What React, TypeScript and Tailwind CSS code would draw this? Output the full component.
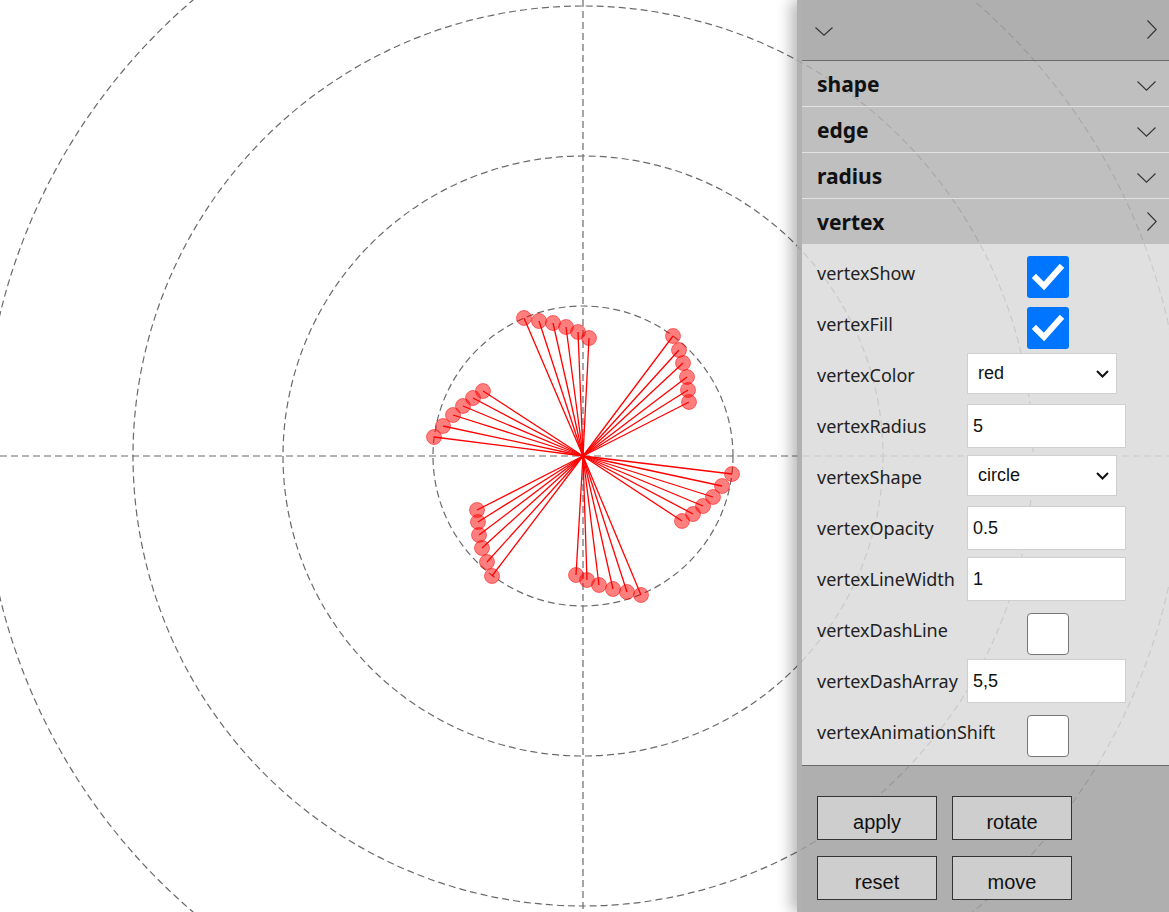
import React from "react";

const CX = 583;
const CY = 456;

// vertex positions read off the plot, grouped by arm
const vertices: [number, number][] = [
  [524, 318], [539, 321], [553, 323], [566, 327], [578, 332], [589, 338],
  [673, 336], [679, 350], [683, 363], [687, 377], [688, 390], [689, 402],
  [483, 391], [473, 398], [463, 406], [453, 415], [443, 426], [434, 437],
  [732, 474], [722, 486], [713, 497], [703, 506], [693, 514], [682, 521],
  [477, 510], [478, 522], [479, 535], [482, 548], [487, 562], [492, 576],
  [576, 575], [587, 580], [599, 585], [613, 589], [627, 592], [641, 595],
];

const Chart = () => (
  <svg width={1169} height={912} className="block">
    {[150, 300, 450, 600].map((r) => (
      <circle key={r} cx={CX} cy={CY} r={r} fill="none" stroke="#6a6a6a" strokeWidth={1.2} strokeDasharray="7 4" />
    ))}
    <line x1={0} y1={CY} x2={1169} y2={CY} stroke="#6a6a6a" strokeWidth={1.2} strokeDasharray="7 4" />
    <line x1={CX} y1={0} x2={CX} y2={912} stroke="#6a6a6a" strokeWidth={1.2} strokeDasharray="7 4" />
    {vertices.map(([x, y], i) => (
      <g key={i}>
        <line x1={CX} y1={CY} x2={x} y2={y} stroke="#ff0000" strokeWidth={1.3} />
        <circle cx={x} cy={y} r={7.5} fill="#ff0000" fillOpacity={0.5} stroke="#ff0000" strokeOpacity={0.5} />
      </g>
    ))}
  </svg>
);

const ChevronDown = ({ w = 19, h = 10 }: { w?: number; h?: number }) => (
  <svg width={w} height={h} viewBox={`0 0 ${w} ${h}`} fill="none">
    <path d={`M0.5 0.5 L${w / 2} ${h - 0.8} L${w - 0.5} 0.5`} stroke="#333" strokeWidth={1.1} />
  </svg>
);

const ChevronRight = ({ w = 10, h = 19 }: { w?: number; h?: number }) => (
  <svg width={w} height={h} viewBox={`0 0 ${w} ${h}`} fill="none">
    <path d={`M0.5 0.5 L${w - 0.8} ${h / 2} L0.5 ${h - 0.5}`} stroke="#333" strokeWidth={1.1} />
  </svg>
);

const Checkbox = ({ checked }: { checked: boolean }) =>
  checked ? (
    <div className="ml-[60px] mt-[5px] w-[42px] h-[42px] rounded-[3px] bg-[#0075ff] flex items-center justify-center">
      <svg width={42} height={42} viewBox="0 0 42 42" fill="none">
        <path d="M9 22 L17 30 L33 12" stroke="#fff" strokeWidth={6} strokeLinecap="square" strokeLinejoin="miter" />
      </svg>
    </div>
  ) : (
    <div className="ml-[60px] mt-[5px] w-[42px] h-[42px] rounded-[4px] bg-white border border-[#767676]" />
  );

const TextInput = ({ value }: { value: string }) => (
  <div className="-mt-[3px] w-[159px] h-[44px] bg-white border border-[#cfcfcf] px-[5px] flex items-center text-[18px] text-[#111] font-['Liberation_Sans',Arial,sans-serif]">
    {value}
  </div>
);

const Select = ({ value }: { value: string }) => (
  <div className="-mt-[6px] w-[150px] h-[41px] bg-white border border-[#cfcfcf] pl-[10px] pr-[7px] flex items-center justify-between text-[18px] text-[#111] font-['Liberation_Sans',Arial,sans-serif]">
    <span>{value}</span>
    <svg width={13} height={8} viewBox="0 0 13 8" fill="none">
      <path d="M1 1 L6.5 6.5 L12 1" stroke="#111" strokeWidth={2} />
    </svg>
  </div>
);

type Row = { label: string; kind: "check" | "input" | "select"; value?: string; checked?: boolean };

const rows: Row[] = [
  { label: "vertexShow", kind: "check", checked: true },
  { label: "vertexFill", kind: "check", checked: true },
  { label: "vertexColor", kind: "select", value: "red" },
  { label: "vertexRadius", kind: "input", value: "5" },
  { label: "vertexShape", kind: "select", value: "circle" },
  { label: "vertexOpacity", kind: "input", value: "0.5" },
  { label: "vertexLineWidth", kind: "input", value: "1" },
  { label: "vertexDashLine", kind: "check", checked: false },
  { label: "vertexDashArray", kind: "input", value: "5,5" },
  { label: "vertexAnimationShift", kind: "check", checked: false },
];

const sections = ["shape", "edge", "radius"];

const Panel = () => (
  <div className="absolute top-0 left-[797px] w-[372px] h-[912px] flex flex-col border-l-[5px] border-l-[#a9a9a9]/90 shadow-[-6px_0_14px_rgba(0,0,0,0.28)] font-['Noto_Sans','Open_Sans',sans-serif]">
    <div className="h-[61px] shrink-0 bg-[#a1a1a1]/85 border-b-[1.5px] border-[#6b6b6b] flex items-center justify-between pl-[13px] pr-[12px]">
      <div className="mt-[3px]">
        <ChevronDown w={18} h={9} />
      </div>
      <div className="-mt-[2px]">
        <ChevronRight />
      </div>
    </div>
    {sections.map((s) => (
      <div
        key={s}
        className="h-[46px] shrink-0 bg-[#b4b4b4]/85 border-b border-[#e2e2e2] flex items-center justify-between pl-[15px] pr-[13px]"
      >
        <span className="text-[21px] font-bold text-[#111] leading-none mt-[2px]">{s}</span>
        <div className="mt-[4px]">
          <ChevronDown />
        </div>
      </div>
    ))}
    <div className="h-[45px] shrink-0 bg-[#b4b4b4]/85 flex items-center justify-between pl-[15px] pr-[12px]">
      <span className="text-[21px] font-bold text-[#111] leading-none mt-[2px]">vertex</span>
      <ChevronRight />
    </div>
    <div className="h-[522px] shrink-0 bg-[#dadada]/85 border-b-[1.5px] border-[#6b6b6b] pt-[5px] pl-[15px]">
      {rows.map((r) => (
        <div key={r.label} className="h-[51px] flex items-center">
          <span className="w-[150px] shrink-0 whitespace-nowrap text-[18px] text-[#222] -mt-[2px]">{r.label}</span>
          {r.kind === "check" && <Checkbox checked={!!r.checked} />}
          {r.kind === "input" && <TextInput value={r.value ?? ""} />}
          {r.kind === "select" && <Select value={r.value ?? ""} />}
        </div>
      ))}
    </div>
    <div className="flex-1 bg-[#a1a1a1]/85 pt-[30px] pl-[15px]">
      <div className="grid grid-cols-[120px_120px] gap-x-[15px] gap-y-[16px] font-['Liberation_Sans',Arial,sans-serif]">
        {["apply", "rotate", "reset", "move"].map((b) => (
          <button
            key={b}
            className="h-[44px] pt-[7px] bg-[#cecece] border border-[#333] text-[20px] text-[#111] flex items-center justify-center"
          >
            {b}
          </button>
        ))}
      </div>
    </div>
  </div>
);

const App = () => (
  <div className="relative w-[1169px] h-[912px] bg-white overflow-hidden">
    <Chart />
    <Panel />
  </div>
);

export default App;
